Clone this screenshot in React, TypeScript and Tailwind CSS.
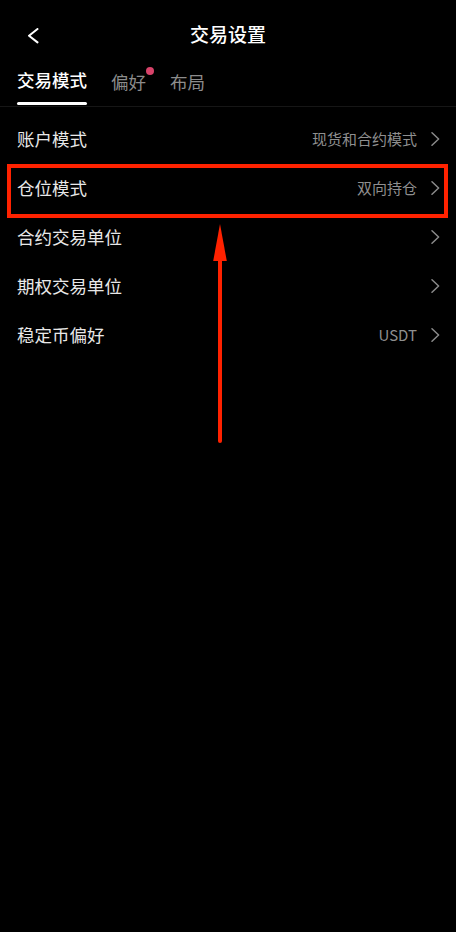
import React from "react";

const font = { fontFamily: '"Noto Sans CJK SC", "Noto Sans", sans-serif' };

function Chevron() {
  return (
    <svg width="9" height="14" viewBox="0 0 9 14" fill="none" className="shrink-0">
      <polyline points="1,0.8 7.6,7 1,13.2" stroke="#8a8a8a" strokeWidth="1.5" strokeLinecap="round" strokeLinejoin="round" />
    </svg>
  );
}

const rows = [
  { label: "账户模式", value: "现货和合约模式" },
  { label: "仓位模式", value: "双向持仓" },
  { label: "合约交易单位", value: "" },
  { label: "期权交易单位", value: "" },
  { label: "稳定币偏好", value: "USDT" },
];

export default function App() {
  return (
    <div className="relative w-[456px] h-[932px] bg-black overflow-hidden" style={font}>
      {/* header */}
      <div className="relative h-[70px] pb-[3px] flex items-center justify-center">
        <svg width="12" height="16" viewBox="0 0 12 16" fill="none" className="absolute left-[27px] top-[28px]">
          <polyline points="10.5,1 2,7.7 10.5,14.4" stroke="#ffffff" strokeWidth="2" strokeLinecap="round" strokeLinejoin="round" />
        </svg>
        <span className="text-[19px] font-medium text-white leading-none">交易设置</span>
      </div>
      {/* tabs */}
      <div className="flex gap-6 pl-[17px] pr-4 h-[37px] border-b border-[#161616]">
        <div className="relative flex flex-col">
          <span className="text-[17.5px] leading-[20px] text-white font-medium">交易模式</span>
          <div className="mt-auto mb-[1px] h-[3px] rounded-full bg-white" />
        </div>
        <div className="relative">
          <span className="text-[17.5px] leading-[20px] text-[#8c8c8c]">偏好</span>
          <span className="absolute -right-[8px] -top-[3px] w-[8px] h-[8px] rounded-full bg-[#d8436a]" />
        </div>
        <div>
          <span className="text-[17.5px] leading-[20px] text-[#8c8c8c]">布局</span>
        </div>
      </div>
      {/* rows */}
      <div className="pt-[7px] flex flex-col">
        {rows.map((r) => (
          <div key={r.label} className="h-[49px] flex items-center pl-[17px] pr-4">
            <span className="text-[17.5px] text-[#e8e8e8] leading-none">{r.label}</span>
            <div className="ml-auto flex items-center gap-[14px]">
              {r.value && <span className="text-[15px] text-[#8f8f8f] leading-none">{r.value}</span>}
              <Chevron />
            </div>
          </div>
        ))}
      </div>
      {/* annotation box */}
      <div className="absolute left-[7px] top-[164px] w-[441px] h-[54px] border-4 border-[#ff2200]" />
      {/* annotation arrow */}
      <svg width="20" height="226" viewBox="0 0 20 226" className="absolute left-[209.5px] top-[220px]">
        <polygon points="10,4 3.2,41 16.8,41" fill="#ff2200" />
        <line x1="10" y1="38" x2="10" y2="221" stroke="#ff2200" strokeWidth="4" strokeLinecap="round" />
      </svg>
    </div>
  );
}
